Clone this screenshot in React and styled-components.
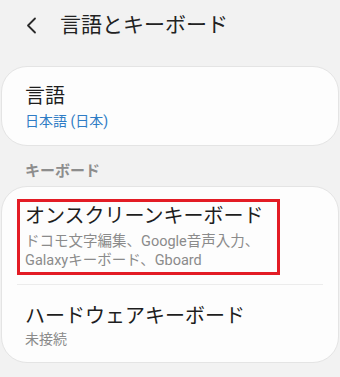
import React from "react";
import styled, { createGlobalStyle } from "styled-components";

const GlobalStyle = createGlobalStyle`
  body {
    margin: 0;
    background: #f2f2f2;
    font-family: Roboto, "Noto Sans CJK JP", sans-serif;
  }
`;

const Page = styled.div`
  width: 340px;
  min-height: 377px;
  background: #f2f2f2;
  display: flex;
  flex-direction: column;
`;

const Header = styled.div`
  height: 50px;
  display: flex;
  align-items: center;
  padding-left: 26px;
  column-gap: 23px;
`;

const Title = styled.h1`
  margin: 0;
  font-size: 21px;
  line-height: 28px;
  font-weight: 400;
  color: #222;
`;

const Card = styled.div`
  margin: ${(p) => p.$top}px 1px 0 1px;
  background: #fdfdfd;
  border: 1px solid #e4e4e4;
  border-radius: 26px;
  padding: 0 15px;
`;

const Item = styled.div`
  padding: ${(p) => p.$pad};
  padding-left: 8px;
`;

const Highlight = styled.div`
  box-sizing: border-box;
  width: 263px;
  border: 3px solid #e31c25;
  padding: 1px 0 2px 5px;
`;

const ItemTitle = styled.div`
  font-size: 20px;
  line-height: 26px;
  color: #1e1e1e;
  white-space: nowrap;
`;

const ItemSub = styled.div`
  font-size: ${(p) => (p.$dense ? "14.5px" : "14px")};
  line-height: ${(p) => (p.$dense ? "19px" : "20px")};
  margin-top: ${(p) => p.$gap || 0}px;
  color: ${(p) => (p.$blue ? "#2f7cc5" : "#8b8b8b")};
  white-space: nowrap;
`;

const Divider = styled.div`
  height: 1px;
  background: #ececec;
  margin-top: 9px;
`;

const Section = styled.div`
  margin: 15px 0 5px 25px;
  font-size: 15px;
  line-height: 20px;
  font-weight: 700;
  color: #8d8d8d;
`;

const Back = () => (
  <svg width="11" height="17" viewBox="0 0 11 17">
    <polyline
      points="9,1.5 2,8.5 9,15.5"
      fill="none"
      stroke="#2a2a2a"
      strokeWidth="1.8"
      strokeLinecap="round"
      strokeLinejoin="round"
    />
  </svg>
);

export default function App() {
  return (
    <>
      <GlobalStyle />
      <Page>
        <Header>
          <Back />
          <Title>言語とキーボード</Title>
        </Header>

        <Card $top={16}>
          <Item $pad="16px 0 14px">
            <ItemTitle>言語</ItemTitle>
            <ItemSub $blue $gap={2}>
              日本語 (日本)
            </ItemSub>
          </Item>
        </Card>

        <Section>キーボード</Section>

        <Card $top={0}>
          <div style={{ paddingTop: 12 }}>
            <Highlight>
              <ItemTitle>オンスクリーンキーボード</ItemTitle>
              <ItemSub $dense $gap={3}>
                ドコモ文字編集、Google音声入力、
                <br />
                Galaxyキーボード、Gboard
              </ItemSub>
            </Highlight>
          </div>
          <Divider />
          <Item $pad="18px 0 13px">
            <ItemTitle>ハードウェアキーボード</ItemTitle>
            <ItemSub>未接続</ItemSub>
          </Item>
        </Card>
      </Page>
    </>
  );
}
